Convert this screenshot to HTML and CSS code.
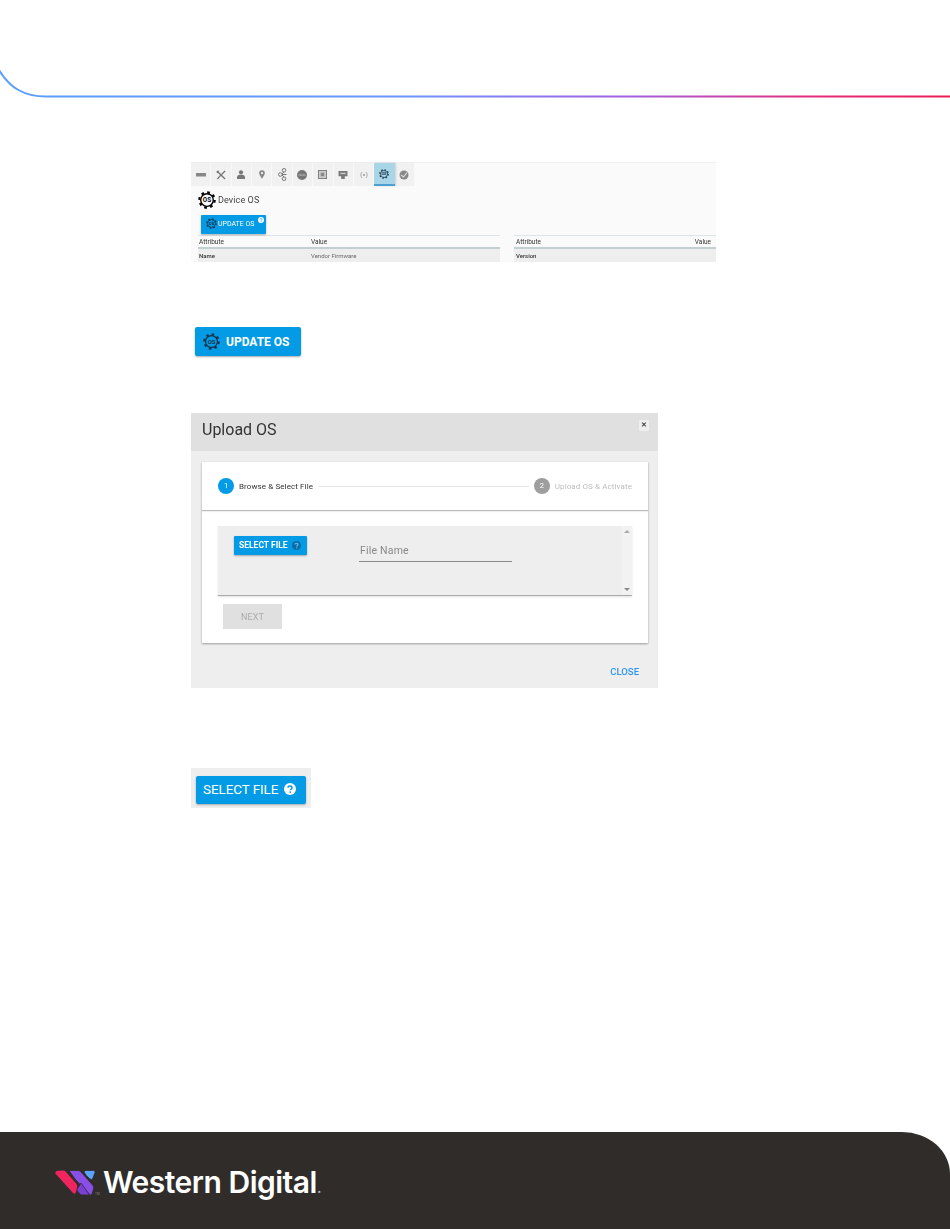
FILE: index.html
```html
<!DOCTYPE html>
<html lang="en">
<head>
<meta charset="utf-8">
<title>Upload OS</title>
<link rel="stylesheet" href="styles.css">
</head>
<body>
<svg class="defs" width="0" height="0" aria-hidden="true">
  <defs>
    <symbol id="gear" viewBox="0 0 24 24">
      <circle cx="12" cy="12" r="10.2" fill="none" stroke="currentColor" stroke-width="3" stroke-dasharray="3.6 4.4"/>
      <circle cx="12" cy="12" r="8.4" fill="none" stroke="currentColor" stroke-width="1.8"/>
      <text x="12" y="15" text-anchor="middle" font-family="Roboto, sans-serif" font-weight="700" font-size="8.4" fill="currentColor">OS</text>
    </symbol>
    <symbol id="help" viewBox="0 0 12 12">
      <circle cx="6" cy="6" r="6" fill="currentColor"/>
      <path d="M4 4.700C4 3.500 5 3 6 3s2 .6 2 1.700c0 1.300-1.600 1.300-1.600 2.600" fill="none" stroke="var(--mark)" stroke-width="1.500"/>
      <circle cx="6.300" cy="9.100" r=".9" fill="var(--mark)"/>
    </symbol>
  </defs>
</svg>

<header class="top">
  <svg class="top-line" width="950" height="98" viewBox="0 0 950 98" aria-hidden="true">
    <defs>
      <linearGradient id="rule" x1="0" y1="0" x2="950" y2="0" gradientUnits="userSpaceOnUse">
        <stop offset="0" stop-color="#5a9fff"/>
        <stop offset=".42" stop-color="#6a97ff"/>
        <stop offset=".66" stop-color="#a45fe0"/>
        <stop offset=".86" stop-color="#e62a79"/>
        <stop offset="1" stop-color="#ee1c55"/>
      </linearGradient>
    </defs>
    <path d="M-1 70C10 88 24 96.500 46 96.500H950" fill="none" stroke="url(#rule)" stroke-width="2"/>
  </svg>
</header>

<main class="content">
  <section class="shot">
    <nav class="tabs">
      <span class="tab"><svg width="10" height="4" viewBox="0 0 10 4"><rect width="10" height="3.500" fill="#888"/></svg></span>
      <span class="tab"><svg width="10" height="10" viewBox="0 0 11 11"><path d="M1 1l9 9M10 1L4 7M1.500 10L4 7M1 3l2-2" stroke="#777" stroke-width="1.500" fill="none"/></svg></span>
      <span class="tab"><svg width="8" height="9" viewBox="0 0 9 10"><circle cx="4.500" cy="2.500" r="2.300" fill="#777"/><path d="M0 10V8c0-2 2-3 4.500-3S9 6 9 8v2z" fill="#777"/></svg></span>
      <span class="tab"><svg width="6" height="9" viewBox="0 0 7 10"><path d="M3.500 0a3.300 3.300 0 0 1 3.300 3.300C6.800 5.500 3.500 10 3.500 10S.2 5.500.2 3.300A3.300 3.300 0 0 1 3.500 0z" fill="#888"/><circle cx="3.500" cy="3.300" r="1.300" fill="#f2f2f2"/></svg></span>
      <span class="tab"><svg width="9" height="13" viewBox="0 0 9 13"><g fill="none" stroke="#777" stroke-width="1"><circle cx="6" cy="2.300" r="1.800"/><circle cx="2.300" cy="6.500" r="1.800"/><circle cx="6" cy="10.700" r="1.800"/><path d="M4 6.500h4.500M6 4.100L4 6M6 8.900L4 7"/></g></svg></span>
      <span class="tab"><svg width="10" height="10" viewBox="0 0 10 10"><circle cx="5" cy="5" r="5" fill="#777"/><path d="M1.500 5h7" stroke="#bbb" stroke-width="1"/></svg></span>
      <span class="tab"><svg width="9" height="9" viewBox="0 0 10 10"><rect x=".5" y=".5" width="9" height="9" fill="#ccc" stroke="#777"/><rect x="3" y="3" width="4" height="4" fill="#888"/></svg></span>
      <span class="tab"><svg width="10" height="8" viewBox="0 0 10 9"><path d="M0 0h10v6H7v3H3V6H0z" fill="#777"/><rect x="2" y="2" width="6" height="1.500" fill="#ccc"/></svg></span>
      <span class="tab"><svg width="10" height="8" viewBox="0 0 10 8"><g fill="none" stroke="#aaa" stroke-width="1"><path d="M3 1C1.500 3 1.500 5 3 7M7 1c1.500 2 1.500 4 0 6"/></g><circle cx="5" cy="4" r="1" fill="#999"/></svg></span>
      <span class="tab tab-on"><svg class="gear-dark" width="10" height="10"><use href="#gear"/></svg></span>
      <span class="tab"><svg width="10" height="10" viewBox="0 0 10 10"><circle cx="5" cy="5" r="4.500" fill="#888"/><path d="M2 5l2.500 2L8 2.500" stroke="#ddd" stroke-width="1.200" fill="none"/></svg></span>
    </nav>
    <div class="device-title">
      <svg class="gear-black" width="18" height="18"><use href="#gear"/></svg>
      <span>Device OS</span>
    </div>
    <button class="btn-small" type="button">
      <svg class="gear-dark" width="11" height="11"><use href="#gear"/></svg>
      <span>UPDATE OS</span>
      <svg class="badge" width="6" height="6"><use href="#help"/></svg>
    </button>
    <div class="tables">
      <div class="mini-table">
        <div class="mini-head mini-cols"><span>Attribute</span><span>Value</span></div>
        <div class="mini-row mini-cols"><span class="strong">Name</span><span>Vendor Firmware</span></div>
      </div>
      <div class="mini-table">
        <div class="mini-head mini-split"><span>Attribute</span><span>Value</span></div>
        <div class="mini-row mini-split"><span class="strong">Version</span></div>
      </div>
    </div>
  </section>

  <div class="fig-update">
    <button class="btn-large" type="button">
      <svg class="gear-dark" width="17" height="17"><use href="#gear"/></svg>
      <span>UPDATE OS</span>
    </button>
  </div>

  <section class="dialog">
    <div class="dialog-head">
      <h2>Upload OS</h2>
      <span class="dialog-x">&#x2715;</span>
    </div>
    <div class="dialog-body">
      <div class="card">
        <div class="stepper">
          <span class="dot dot-on">1</span>
          <span class="step-text">Browse &amp; Select File</span>
          <span class="step-line"></span>
          <span class="dot dot-off">2</span>
          <span class="step-text step-muted">Upload OS &amp; Activate</span>
        </div>
        <div class="panel">
          <div class="panel-main">
            <button class="btn-select" type="button">
              <span>SELECT FILE</span>
              <svg class="help-dark" width="9" height="9"><use href="#help"/></svg>
            </button>
            <div class="file-field">File Name</div>
          </div>
          <div class="scroll"><span class="arrow-up"></span><span class="arrow-down"></span></div>
        </div>
        <button class="btn-next" type="button">NEXT</button>
      </div>
      <div class="dialog-foot"><span class="close-link">CLOSE</span></div>
    </div>
  </section>

  <div class="fig-select">
    <button class="btn-select-large" type="button">
      <span>SELECT FILE</span>
      <svg class="help-light" width="12" height="12"><use href="#help"/></svg>
    </button>
  </div>
</main>

<footer class="foot">
  <svg class="logo-mark" width="44" height="26" viewBox="0 0 44 26" aria-hidden="true">
    <g stroke="#2f2c2a" stroke-width=".8">
      <path d="M14 .5H23Q25 .5 26 2L38 15.500Q39 17 38.500 19L37 24Q36 26 34 24L20 9Z" fill="#8a4fe8"/>
      <path d="M26 13L34 24Q35.500 25.500 33.500 25H27Q25 25 24 23L21.500 20Z" fill="#7a3fd0"/>
      <path d="M0 3.500Q-.5 1 2 .5L8 0Q10 0 11 1.500L22 14Q23 15.500 22.500 17.500L21 23Q20 25 18 23.500Z" fill="#f0255f"/>
      <path d="M29 2Q29 .5 31 .5H38.500Q40.500 .5 40 2.500L38 8Q37 10.500 35 9Q31 6 29 2Z" fill="#5aa5fb"/>
    </g>
    <text x="40" y="25" font-family="Inter, sans-serif" font-size="3" fill="#888">TM</text>
  </svg>
  <span class="wordmark">Western Digital<span class="reg">.</span></span>
</footer>
</body>
</html>
```
FILE: styles.css
```css
* { box-sizing: border-box; }
html, body { margin: 0; padding: 0; }
body {
  width: 950px;
  height: 1229px;
  display: flex;
  flex-direction: column;
  background: #fff;
  font-family: Roboto, "Liberation Sans", sans-serif;
  overflow: hidden;
}
button { font-family: inherit; border: 0; margin: 0; padding: 0; }
.defs { position: absolute; }
:root { --mark: #fff; }
.top { height: 98px; flex: none; }
.top-line { display: block; }
.content { flex: 1; padding: 64px 0 0 191px; }

/* small screenshot */
.shot {
  width: 525px;
  height: 100px;
  background: #fafafa;
  border-top: 1px solid #eee;
  filter: blur(.45px);
  color: #444;
}
.tabs {
  width: 224px;
  height: 23px;
  display: grid;
  grid-template-columns: repeat(11, 1fr);
  background: #f1f1f1;
}
.tab {
  display: flex;
  align-items: center;
  justify-content: center;
  border-right: 1px solid #f8f8f8;
}
.tab-on { background: #a9d6e6; border-right: 0; border-bottom: 2px solid #4c9fd1; box-shadow: 1px 0 2px rgba(0,0,0,.15); }
.gear-dark { color: #14334a; }
.gear-black { color: #000; }
.device-title {
  display: flex;
  align-items: center;
  gap: 2px;
  height: 18px;
  margin: 5px 0 0 7px;
  font-size: 9px;
  letter-spacing: .1px;
  color: #444;
}
.btn-small {
  display: flex;
  align-items: center;
  position: relative;
  width: 65px;
  height: 19px;
  margin: 6px 0 0 10px;
  padding: 0 0 2px 5px;
  gap: 1px;
  background: #039be5;
  color: #fff;
  font-size: 7px;
  border-radius: 1px;
  box-shadow: 0 1px 2px rgba(0,0,0,.3);
}
.badge { position: absolute; top: 2px; right: 2px; color: #fff; --mark: #039be5; }
.tables {
  display: grid;
  grid-template-columns: 302px 202px;
  gap: 14px;
  margin: 1px 0 0 7px;
}
.mini-head {
  height: 14px;
  border-top: 1px solid #dde5e8;
  border-bottom: 2px solid #c3d0d2;
  font-size: 6.500px;
  line-height: 13px;
  color: #333;
}
.mini-row {
  height: 13px;
  background: #eee;
  font-size: 6px;
  line-height: 14px;
  color: #666;
}
.mini-cols { display: grid; grid-template-columns: 112px 1fr; padding-left: 1px; }
.mini-split { display: flex; justify-content: space-between; padding: 0 5px 0 2px; }
.strong { font-weight: 500; color: #333; }

/* update button */
.fig-update { margin: 65px 0 0 4px; }
.btn-large {
  display: flex;
  align-items: center;
  gap: 6px;
  width: 106px;
  height: 29px;
  padding-left: 8px;
  background: #039be5;
  border-radius: 2px;
  box-shadow: 0 1px 2px rgba(0,0,0,.35);
  color: #fff;
  font-size: 12px;
  font-weight: 700;
}

/* dialog */
.dialog { width: 467px; height: 275px; margin-top: 57px; background: #eee; filter: blur(.2px); }
.dialog-head {
  height: 38px;
  background: #e0e0e0;
  display: flex;
  justify-content: space-between;
  padding: 7px 9px 0 11px;
}
.dialog-head h2 { margin: 0; font-size: 16px; line-height: 19px; font-weight: 400; color: #333; }
.dialog-x {
  width: 10px;
  height: 11px;
  background: #eee;
  color: #444;
  font-size: 7px;
  line-height: 11px;
  text-align: center;
  font-weight: 700;
}
.dialog-body { padding: 11px 10px 0 11px; }
.card {
  height: 181px;
  background: #fff;
  box-shadow: 0 1px 2px rgba(0,0,0,.35);
  display: flex;
  flex-direction: column;
  align-items: flex-start;
}
.stepper {
  display: flex;
  align-items: center;
  width: 100%;
  height: 49px;
  padding: 0 16px;
  border-bottom: 1px solid #bbb;
  box-shadow: 0 1px 1px rgba(0,0,0,.06);
  font-size: 8px;
}
.dot {
  width: 16px;
  height: 16px;
  flex: none;
  border-radius: 50%;
  color: #fff;
  font-size: 7.500px;
  line-height: 16px;
  text-align: center;
}
.dot-on { background: #039be5; }
.dot-off { background: #9e9e9e; }
.step-text { margin-left: 5px; letter-spacing: .1px; color: #333; white-space: nowrap; }
.step-muted { color: #bdbdbd; }
.step-line { flex: 1; height: 1px; margin: 0 5px; background: #e6e6e6; }
.panel {
  width: 414px;
  height: 70px;
  margin: 15px 0 0 16px;
  display: flex;
  flex: none;
  background: #eee;
  border-bottom: 1px solid #aaa;
  box-shadow: 0 1px 2px rgba(0,0,0,.12);
}
.panel-main { flex: 1; display: flex; align-items: flex-start; padding: 10px 0 0 16px; }
.btn-select {
  display: flex;
  align-items: center;
  gap: 4px;
  width: 73px;
  height: 19px;
  padding: 0 0 1px 5px;
  background: #039be5;
  border-radius: 1px;
  box-shadow: 0 1px 2px rgba(0,0,0,.3);
  color: #fff;
  font-size: 8.500px;
  font-weight: 700;
}
.help-dark { color: #0a6ca6; --mark: #6cc4ee; }
.file-field {
  width: 153px;
  height: 26px;
  margin-left: 52px;
  padding: 8px 0 0 1px;
  border-bottom: 1px solid #888;
  font-size: 10.500px;
  letter-spacing: .2px;
  color: #888;
}
.scroll {
  width: 10px;
  display: flex;
  flex-direction: column;
  justify-content: space-between;
  align-items: center;
  padding: 4px 0 4px;
  background: #f2f2f2;
}
.arrow-up, .arrow-down { width: 0; height: 0; border-left: 3px solid transparent; border-right: 3px solid transparent; }
.arrow-up { border-bottom: 3px solid #aaa; }
.arrow-down { border-top: 3px solid #888; }
.btn-next {
  width: 59px;
  height: 25px;
  margin: 8px 0 0 21px;
  background: #e0e0e0;
  color: #aaa;
  font-size: 9px;
  letter-spacing: .1px;
}
.dialog-foot { display: flex; justify-content: flex-end; padding: 23px 9px 0 0; }
.close-link { color: #2e96f0; font-size: 9.500px; font-weight: 500; line-height: 11px; }

/* select button */
.fig-select { width: 120px; height: 40px; margin-top: 80px; padding: 8px 5px; background: #eee; }
.btn-select-large {
  display: flex;
  align-items: center;
  gap: 6px;
  width: 110px;
  height: 28px;
  padding: 0 0 2px 7px;
  background: #039be5;
  border-radius: 2px;
  box-shadow: 0 1px 2px rgba(0,0,0,.3);
  color: #fff;
  font-size: 13.500px;
  letter-spacing: -.1px;
}
.help-light { color: #fff; --mark: #039be5; }

/* footer */
.foot {
  height: 97px;
  flex: none;
  display: flex;
  align-items: center;
  gap: 4px;
  padding: 3px 0 0 55px;
  background: #2f2c2a;
  border-top-right-radius: 48px 42px;
}
.logo-mark { overflow: visible; margin-top: 2px; }
.wordmark { font-family: Inter, sans-serif; font-size: 30px; font-weight: 600; letter-spacing: -.5px; color: #fff; line-height: 1; }
.reg { color: #aaa; font-size: 14px; }
```
